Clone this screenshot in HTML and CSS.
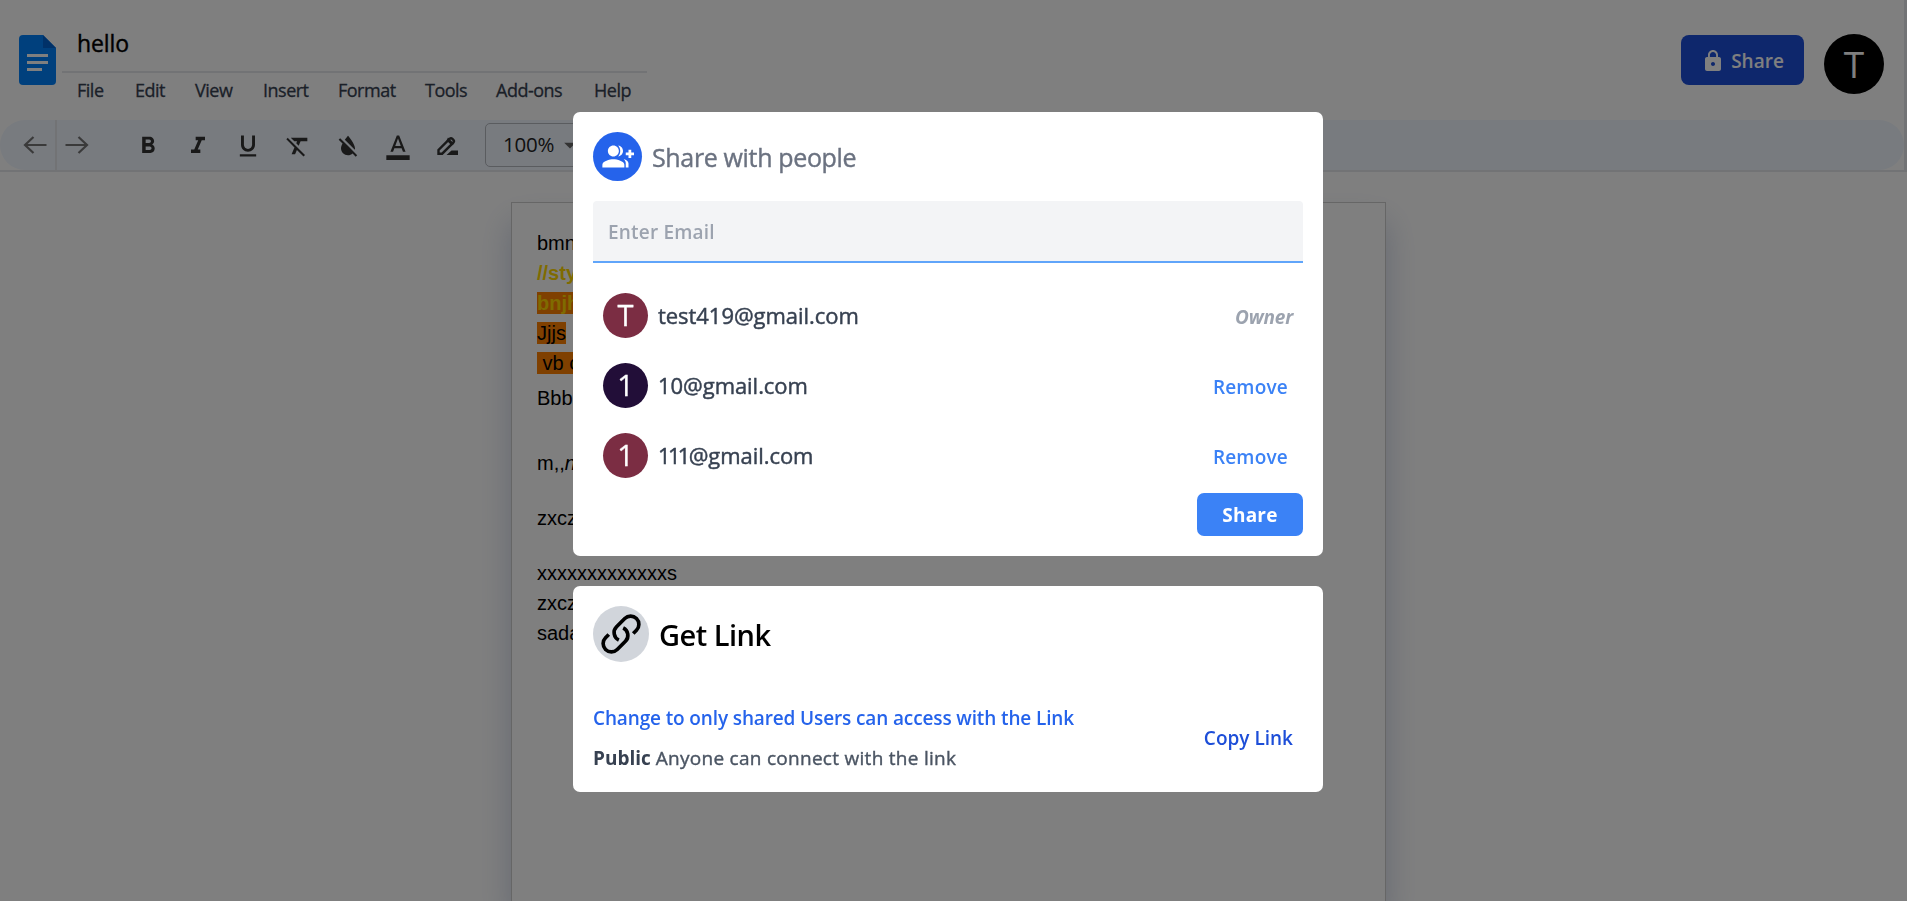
FILE: index.html
```html
<!DOCTYPE html>
<html lang="en">
<head>
<meta charset="utf-8">
<title>hello</title>
<link rel="stylesheet" href="styles.css">
</head>
<body>
<header class="header">
  <svg class="doc-icon" width="37" height="50" viewBox="0 0 37 50"><path fill="#0081fb" d="M4 0h20l13 13v33a4 4 0 0 1-4 4H4a4 4 0 0 1-4-4V4a4 4 0 0 1 4-4z"/><path fill="#0062d0" d="M24 0l13 13H24z"/><path fill="#fff" d="M8 19h21v3H8zM8 26h21v3H8zM8 33h15v3H8z"/></svg>
  <div class="title-block">
    <div class="doc-title">hello</div>
    <nav class="menu">
      <a class="w28">File</a><a class="w30">Edit</a><a class="w38">View</a><a class="w45">Insert</a><a class="w57">Format</a><a class="w41">Tools</a><a class="w68">Add-ons</a><a>Help</a>
    </nav>
  </div>
  <button class="share-top"><svg width="24" height="24" viewBox="0 0 24 24"><path fill="#fff" d="M18 8h-1V6c0-2.760-2.240-5-5-5S7 3.240 7 6v2H6c-1.100 0-2 .9-2 2v10c0 1.100.9 2 2 2h12c1.100 0 2-.9 2-2V10c0-1.100-.9-2-2-2zm-6 9c-1.100 0-2-.9-2-2s.9-2 2-2 2 .9 2 2-.9 2-2 2zm3.100-9H8.900V6c0-1.710 1.390-3.100 3.100-3.100s3.100 1.390 3.100 3.100v2z"/></svg><span>Share</span></button>
  <div class="avatar-top">T</div>
</header>
<div class="toolbar-row">
<div class="toolbar">
  <div class="history"><svg width="24" height="24" viewBox="0 0 24 24"><path class="line" d="M23.500 12H2M10.500 4l-8.500 8 8.500 8"/></svg></div>
  <div class="history second"><svg width="24" height="24" viewBox="0 0 24 24"><path class="line" d="M.5 12H22M13.500 4l8.500 8-8.500 8"/></svg></div>
  <div class="tools">
    <svg viewBox="0 0 24 24"><path d="M15.600 10.790c.97-.67 1.650-1.770 1.650-2.790 0-2.260-1.750-4-4-4H7v14h7.040c2.090 0 3.710-1.700 3.710-3.790 0-1.520-.86-2.820-2.150-3.420zM10 6.500h3c.83 0 1.500.67 1.500 1.500s-.67 1.500-1.500 1.500h-3v-3zm3.500 9H10v-3h3.500c.83 0 1.500.67 1.500 1.500s-.67 1.500-1.500 1.500z"/></svg>
    <svg viewBox="0 0 24 24"><path d="M10 4v3h2.210l-3.420 8H6v3h8v-3h-2.210l3.420-8H18V4z"/></svg>
    <svg viewBox="0 0 24 24"><path d="M12 17c3.310 0 6-2.690 6-6V3h-2.500v8c0 1.930-1.570 3.500-3.500 3.500S8.500 12.930 8.500 11V3H6v8c0 3.310 2.690 6 6 6zm-7 2v2h14v-2H5z"/></svg>
    <svg viewBox="0 0 24 24"><path d="M3.270 5L2 6.270l6.970 6.970L6.500 19h3l1.570-3.660L16.730 21 18 19.730 3.550 5.270 3.270 5zM6 5v.18L8.820 8h2.400l-.72 1.680 2.100 2.100L14.210 8H20V5H6z"/></svg>
    <svg viewBox="0 0 24 24"><path d="M18 14c0-4-6-10.800-6-10.800s-1.330 1.510-2.730 3.520l8.590 8.590c.09-.42.14-.87.14-1.310zm-.88 3.120L12.500 12.500 5.270 5.270 4 6.550l3.320 3.320C6.550 11.320 6 12.790 6 14c0 3.310 2.690 6 6 6 1.520 0 2.900-.57 3.960-1.500l2.630 2.630 1.270-1.270-2.740-2.740z"/></svg>
    <svg viewBox="0 0 24 24"><path d="M2 20h20v4H2zM11 3L5.500 17h2.250l1.120-3h6.250l1.120 3h2.250L13 3h-2zm-1.380 9L12 5.670 14.380 12H9.620z"/></svg>
    <svg viewBox="0 0 28 28"><path class="pen" d="M4.500 21.700v-3.700L15.600 6.900a2 2 0 0 1 2.800 0l.9.9a2 2 0 0 1 0 2.800L8.200 21.700z"/><path d="M14 5.600l6.200 6.200-2.500 1.800-5.200-5.200zM12.500 23l5-4.600H24V23z"/></svg>
  </div>
  <div class="zoom-select"><span>100%</span><svg width="28" height="28" viewBox="0 0 24 24"><path fill="#666" d="M7 10l5 5 5-5z"/></svg></div>
</div>
</div>
<main class="workspace">
  <article class="page">
    <p>bmnm</p>
    <p class="gold">//style</p>
    <p class="gold"><mark>bnjhjk</mark></p>
    <p><mark>Jjjs</mark></p>
    <p><mark>&nbsp;vb cv</mark></p>
    <p class="p-bbb">Bbbb</p>
    <p class="p-mm">m,,<i>nm</i></p>
    <p class="p-zx">zxczx</p>
    <p class="p-xx">xxxxxxxxxxxxxs</p>
    <p>zxczx</p>
    <p>sadas</p>
  </article>
</main>
<div class="scroll-track"></div>
<div class="overlay">
  <section class="card share-card">
    <div class="share-head">
      <span class="people-badge"><svg width="33" height="33" viewBox="0 0 24 24"><path fill="#fff" d="M13 8c0-2.210-1.790-4-4-4S5 5.790 5 8s1.790 4 4 4 4-1.790 4-4zM1 18v2h16v-2c0-2.660-5.330-4-8-4s-8 1.340-8 4zM12.510 4.050C13.430 5.110 14 6.490 14 8s-.57 2.890-1.490 3.950C14.470 11.700 16 10.040 16 8s-1.530-3.700-3.490-3.950zM16.530 13.830C17.420 14.660 18 15.700 18 17v3h2v-3c0-1.450-1.590-2.510-3.470-3.170zM20 7h2v2h2v2h-2v2h-2v-2h-2V9h2z"/></svg></span>
      <h2>Share with people</h2>
    </div>
    <div class="email">Enter Email</div>
    <ul class="people">
      <li><span class="avatar">T</span><span class="mail">test419@gmail.com</span><em>Owner</em></li>
      <li><span class="avatar violet">1</span><span class="mail">10@gmail.com</span><a>Remove</a></li>
      <li><span class="avatar">1</span><span class="mail"><span class="ones">111</span>@gmail.com</span><a>Remove</a></li>
    </ul>
    <button class="share-btn">Share</button>
  </section>
  <section class="card link-card">
    <div class="link-head">
      <span class="link-badge"><svg width="44" height="44" viewBox="0 0 24 24"><path fill="none" stroke="#000" stroke-width="2" stroke-linejoin="round" d="M13.190 8.688a4.500 4.500 0 0 1 1.242 7.244l-4.500 4.500a4.500 4.500 0 0 1-6.364-6.364l1.757-1.757m13.350-.622l1.757-1.757a4.500 4.500 0 0 0-6.364-6.364l-4.500 4.500a4.500 4.500 0 0 0 1.242 7.244"/></svg></span>
      <h2>Get Link</h2>
    </div>
    <div class="link-body">
      <div class="link-text">
        <a class="change">Change to only shared Users can access with the Link</a>
        <p class="public"><b>Public</b> <span>Anyone can connect with the link</span></p>
      </div>
      <a class="copy">Copy Link</a>
    </div>
  </section>
</div>
</body>
</html>
```
FILE: styles.css
```css
* { box-sizing: border-box; }
body { margin: 0; height: 901px; overflow: hidden; background: #fff; font-family: "Open Sans", "Noto Sans", sans-serif; color: #000; }
h2, p, ul { margin: 0; padding: 0; }
button { border: 0; font-family: inherit; }
.header { height: 120px; display: flex; align-items: flex-start; padding: 34px 23px 0 19px; }
.doc-icon { margin-top: 1px; }
.title-block { margin-left: 6px; width: 585px; margin-top: -10px; }
.doc-title { height: 49px; border-bottom: 2px solid #e5e7eb; padding: 4px 0 0 15px; font-size: 23px; line-height: 30px; letter-spacing: -.1px; -webkit-text-stroke: .4px; }
.menu { display: flex; gap: 30px; padding: 5px 0 0 15px; font-size: 18px; line-height: 24px; color: #374151; -webkit-text-stroke: .3px; }
.menu a { letter-spacing: -.5px; white-space: nowrap; }
.w28 { width: 28px; }
.w30 { width: 30px; }
.w38 { width: 38px; }
.w45 { width: 45px; }
.w57 { width: 57px; }
.w41 { width: 41px; }
.w68 { width: 68px; }
.share-top { margin: 1px 20px 0 auto; padding: 1px 0 0; width: 123px; height: 50px; border-radius: 8px; background: #1d4ed8; color: #fff; display: flex; align-items: center; justify-content: center; gap: 6px; font-size: 19px; font-weight: 600; }
.avatar-top { width: 60px; height: 60px; border-radius: 50%; background: #000; color: #fff; font-size: 37px; line-height: 60px; text-align: center; }
.toolbar-row { height: 52px; border-bottom: 2px solid #e5e7eb; }
.toolbar { height: 50px; width: 1904px; background: #f0f6ff; border-radius: 25px; display: flex; }
.history { width: 57px; border-right: 2px solid #e5e7eb; display: flex; align-items: center; justify-content: flex-end; padding-right: 8px; }
.history.second { border: 0; justify-content: flex-start; padding-left: 8px; }
.line { fill: none; stroke: #757575; stroke-width: 2.200; }
.tools { display: flex; gap: 22px; align-items: center; margin-left: 20px; padding-top: 2px; width: 351px; }
.tools svg { width: 28px; height: 28px; fill: #333; }
.tools .pen { fill: none; stroke: #333; stroke-width: 2.400; }
.zoom-select { width: 104px; height: 44px; margin-top: 3px; border: 1px solid #b4b8be; border-radius: 5px; display: flex; align-items: center; padding-left: 17px; font-size: 20.500px; letter-spacing: -.2px; color: #222; gap: 2px; }
.zoom-select svg { flex: none; }
.zoom-select span { margin-top: -2px; }
.workspace { height: 729px; padding-top: 30px; overflow: hidden; }
.page { width: 875px; height: 699px; margin-left: 511px; padding: 25px; border: 1px solid #ccc; border-bottom: 0; box-shadow: 0 20px 30px rgba(30,64,140,.24); background: #fff; font: 20px/30px "Liberation Sans", Arial, sans-serif; }
.gold { color: #ffd700; font-weight: 700; }
.page mark { background: #ff8000; color: inherit; }
.p-bbb { margin-top: 5px; }
.p-mm { margin-top: 35px; }
.p-zx, .p-xx { margin-top: 25px; }
.overlay { position: fixed; inset: 0; background: rgba(0,0,0,.5); display: flex; flex-direction: column; gap: 30px; padding: 112px 0 0 573px; }
.card { width: 750px; background: #fff; border-radius: 7px; padding: 20px; }
.share-card { height: 444px; }
.share-head, .link-head { display: flex; align-items: center; }
.people-badge { width: 49px; height: 49px; border-radius: 50%; background: #2563eb; display: flex; align-items: center; justify-content: center; }
.share-head h2 { margin-left: 10px; font-size: 25px; font-weight: 400; color: #6b7280; letter-spacing: -.35px; -webkit-text-stroke: .4px; }
.email { margin-top: 20px; height: 62px; border-bottom: 2px solid #60a5fa; background: #f3f4f6; border-radius: 4px 4px 0 0; padding: 1px 0 0 15px; line-height: 61px; font-size: 19px; letter-spacing: .2px; font-weight: 600; color: #9ca3af; }
.people { list-style: none; margin-top: 17px; }
.people li { height: 70px; display: flex; align-items: center; padding: 0 10px; }
.avatar { width: 45px; height: 45px; border-radius: 50%; background: #7b2d43; color: #fff; font-size: 29px; line-height: 43px; text-align: center; -webkit-text-stroke: .3px; }
.violet { background: #220e38; }
.mail { margin-left: 10px; font-size: 22px; color: #374151; letter-spacing: -.05px; -webkit-text-stroke: .45px; }
.ones { letter-spacing: -2.700px; margin-right: 1px; }
.people em, .people a { margin: 4px 0 0 auto; font-size: 19px; font-weight: 600; letter-spacing: .2px; }
.people em { color: #9ca3af; font-weight: 700; letter-spacing: -.2px; }
.people a { color: #3b82f6; padding-right: 5px; }
.share-btn { display: block; margin: 3px 0 0 auto; width: 106px; height: 43px; background: #3b82f6; border-radius: 7px; color: #fff; font-size: 19px; font-weight: 700; letter-spacing: .2px; }
.link-card { height: 206px; }
.link-badge { width: 56px; height: 56px; border-radius: 50%; background: #d1d5db; display: flex; align-items: center; justify-content: center; }
.link-head h2 { margin: 2px 0 0 10px; font-size: 29px; font-weight: 600; letter-spacing: -.5px; line-height: 54px; }
.link-body { display: flex; align-items: center; margin-top: 36px; padding-right: 10px; font-size: 19px; }
.link-text { line-height: 40px; white-space: nowrap; }
.change { color: #2563eb; font-weight: 600; letter-spacing: -.13px; display: block; }
.public { color: #4b5563; }
.public span { letter-spacing: .28px; -webkit-text-stroke: .4px; }
.public b { color: #374151; font-weight: 700; }
.copy { margin-left: auto; color: #1d4ed8; font-weight: 600; }
.scroll-track { position: fixed; top: 0; right: 0; width: 3px; height: 172px; background: #e5e7eb; }
```
